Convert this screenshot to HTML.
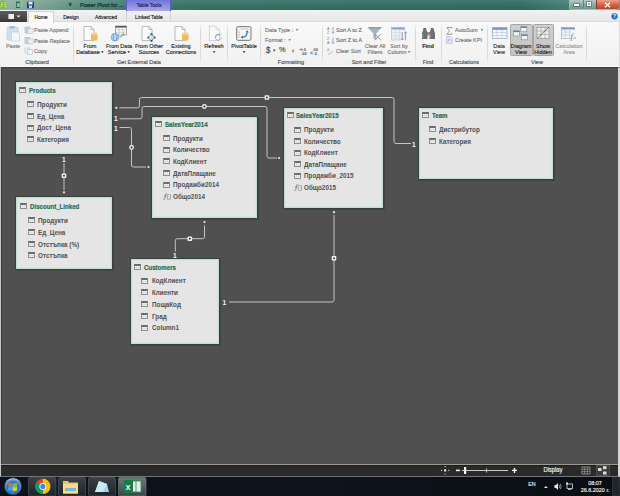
<!DOCTYPE html>
<html><head><meta charset="utf-8">
<style>
*{margin:0;padding:0;box-sizing:border-box}
html,body{width:620px;height:496px;overflow:hidden;background:#505050;font-family:"Liberation Sans",sans-serif}
.a{position:absolute}
#title{left:0;top:0;width:620px;height:10.5px;background:linear-gradient(rgba(255,255,255,0.10),rgba(255,255,255,0) 70%),linear-gradient(90deg,#93b5a3 0,#7ba291 40px,#548d7d 85px,#3f7b6e 125px,#326f63 200px,#2f6a60 400px,#2d6961 520px,#3f7d74 565px,#5f958c 620px)}
#tabs{left:0;top:10px;width:620px;height:12px;background:linear-gradient(#f2f2f2,#e6e6e6);border-bottom:1px solid #dadada}
#ribbon{left:0;top:22px;width:620px;height:45px;background:linear-gradient(#f9f9f9,#f0f0f0);border-bottom:1.5px solid #fafafa;border-right:1px solid #dcdcdc}
#canvas{left:0;top:67px;width:620px;height:397px;background:#505050;border-top:1.5px solid #3c3c3c;border-right:2px solid #d6d6d6}
#status{left:0;top:464px;width:620px;height:13px;background:linear-gradient(#9a9a9a 0,#9a9a9a 1.5px,#1c1c1c 1.5px,#1c1c1c 2.5px,#2a2a2a 2.5px);border-bottom:1px solid #6f7376;border-left:1.2px solid #c4c4c4;border-right:2px solid #d6d6d6}
#taskbar{left:0;top:477px;width:620px;height:19px;background:linear-gradient(90deg,#0c1119,#0e141c 50%,#0a0e14)}
.t{position:absolute;white-space:nowrap;font-size:6px;color:#444;line-height:7px}
.box{position:absolute;background:#e5e5e5;border:1px solid #bfe0d0;box-shadow:inset 0 0 0 1px rgba(205,232,219,0.6),0 0 0 1px #36423c,0 0 1px 1.5px rgba(40,50,45,0.35)}
.bt{position:absolute;font-weight:bold;color:#2a6c4e;font-size:7px;line-height:7px;white-space:nowrap;-webkit-text-stroke:0.2px currentColor;transform:scaleX(0.875);transform-origin:0 50%}
.bf{position:absolute;font-weight:bold;color:#505050;font-size:7px;line-height:7px;white-space:nowrap;transform:scaleX(0.9);transform-origin:0 50%}
.ic{position:absolute;width:7px;height:6px;border:1px solid #8c8c8c;background:
 linear-gradient(#9a9a9a,#9a9a9a) 0 1px/100% 0.8px no-repeat,
 linear-gradient(#c4c4c4,#c4c4c4) 1.6px 0/0.8px 100% no-repeat,
 linear-gradient(#c4c4c4,#c4c4c4) 3.2px 0/0.8px 100% no-repeat,
 #f4f4f4}
.c{position:absolute;transform:translateX(-50%) scaleX(0.92);white-space:nowrap;font-size:6px;line-height:6px;color:#222;-webkit-text-stroke:0.15px currentColor}
.l{position:absolute;transform:scaleX(0.92);transform-origin:0 50%;white-space:nowrap;font-size:6px;line-height:6px;color:#222;-webkit-text-stroke:0.15px currentColor}
.sep{position:absolute;top:25px;width:1px;height:38px;background:linear-gradient(rgba(214,214,214,0.3),#d9d9d9 20%,#d9d9d9 80%,rgba(214,214,214,0.3))}
</style></head><body>
<div id="title" class="a"></div>
<div id="tabs" class="a"></div>
<div id="ribbon" class="a"></div>
<div id="canvas" class="a"></div>
<div class="a" style="left:0;top:67px;width:1.2px;height:397px;background:#c4c4c4"></div><div class="a" style="left:1.2px;top:67px;width:1px;height:397px;background:#3e3e3e"></div>
<!-- title bar -->
<svg class="a" style="left:0;top:0" width="80" height="10" viewBox="0 0 80 10">
<circle cx="3" cy="4.8" r="4.2" fill="#7fb83a"/><path d="M2 2.5V5.5q0 1.5-1.5 1.5M4.3 2.8h2M4.3 4.8h2M4.3 6.8h2" stroke="#e9f5d0" stroke-width="0.9" fill="none"/>
<rect x="16" y="1.6" width="4.2" height="6.4" fill="#1d6b40"/><rect x="19.5" y="2.4" width="3.6" height="4.8" fill="#8fb89c"/><text x="16.6" y="6.6" font-size="4.6" font-weight="bold" fill="#e8f3ea" font-family="Liberation Sans">X</text>
<rect x="27" y="1.6" width="7" height="6.6" fill="#2a3f9a"/><rect x="28.5" y="1.8" width="4" height="2.6" fill="#e8eefc"/><rect x="29" y="5.5" width="3" height="2.5" fill="#c9d4f0"/>
<rect x="38" y="3" width="4.5" height="3.5" fill="#7aa0a8" opacity="0.45"/><rect x="47" y="3" width="5" height="3.5" fill="#7aa0a8" opacity="0.35"/><rect x="60" y="3.5" width="5" height="3" fill="#7aa0a8" opacity="0.35"/>
<path d="M68.7 4.2h3l-1.5 2z" fill="#1a1a1a"/><rect x="68.7" y="2.8" width="3" height="0.7" fill="#1a1a1a"/>
</svg>
<div class="l" style="left:80px;top:2.3px;font-size:6px;color:#142020">Power Pivot for ...</div>
<div class="a" style="left:126px;top:0;width:45px;height:10.5px;background:linear-gradient(#6f74d8,#8d90e4 55%,#a9a8ec);border-left:1px solid #5a5fc0;border-right:1px solid #5a5fc0"></div>
<div class="c" style="left:148.5px;top:1.7px;font-size:5.4px;color:#1d1d44">Table Tools</div>
<div class="a" style="left:568.5px;top:0;width:50.5px;height:9.6px;border:1px solid rgba(220,235,230,0.55);border-top:none;border-radius:0 0 2px 2px"></div>
<div class="a" style="left:569.5px;top:0;width:13.5px;height:8.6px;background:linear-gradient(#b4cbc4,#86aba1 55%,#6e988d)"></div>
<div class="a" style="left:573.5px;top:4.2px;width:5px;height:1.6px;background:#fff;box-shadow:0 0 0 0.5px #445"></div>
<div class="a" style="left:583px;top:0;width:13px;height:8.6px;background:linear-gradient(#b4cbc4,#86aba1 55%,#6e988d);border-left:0.6px solid #5d8a80"></div>
<div class="a" style="left:586.5px;top:2.2px;width:4.6px;height:3.8px;border:1.2px solid #fff;box-shadow:0 0 0 0.5px #445"></div>
<div class="a" style="left:596px;top:0;width:22.5px;height:8.6px;background:linear-gradient(#eba08c,#d7664a 50%,#c0402a);border-left:0.6px solid #8c3a2c;border-radius:0 0 2px 0"></div>
<svg class="a" style="left:604px;top:1.5px" width="7" height="6"><path d="M1 0.8l5 4.4M6 0.8l-5 4.4" stroke="#fff" stroke-width="1.5"/></svg>
<!-- tabs -->
<div class="a" style="left:0;top:11px;width:27.3px;height:10.5px;background:linear-gradient(#5c5c5c,#3a3a3a)"></div>
<div class="a" style="left:7.5px;top:13.5px;width:6px;height:5px;background:#eee;border-left:1.5px solid #aaa"></div>
<svg class="a" style="left:16px;top:15px" width="5" height="3"><path d="M0.5 0.5h4l-2 2z" fill="#eee"/></svg>
<div class="a" style="left:28px;top:11px;width:25.5px;height:11.5px;background:#fafafa;border:1px solid #d2d2d2;border-bottom:none"></div>
<div class="c" style="left:41px;top:14.1px;font-size:5.4px;color:#1a1a1a">Home</div>
<div class="c" style="left:70.7px;top:14.1px;font-size:5.4px;color:#1a1a1a">Design</div>
<div class="c" style="left:106.2px;top:14.1px;font-size:5.4px;color:#1a1a1a">Advanced</div>
<div class="a" style="left:126px;top:10.5px;width:45px;height:11px;border-left:1px solid #d0d0d6;border-right:1px solid #d0d0d6"></div>
<div class="c" style="left:148.5px;top:14.1px;font-size:5.4px;color:#1a1a1a">Linked Table</div>
<svg class="a" style="left:610px;top:12px" width="9" height="9"><circle cx="4.5" cy="4.3" r="3.1" fill="#2f68c9"/><text x="4.5" y="6.2" font-size="4.8" font-weight="bold" fill="#fff" text-anchor="middle" font-family="Liberation Sans">?</text></svg>
<!-- clipboard -->
<svg class="a" style="left:5px;top:25px" width="18" height="17" viewBox="0 0 18 17">
<rect x="2.2" y="2.2" width="11" height="13" rx="0.8" fill="#d3dde6" stroke="#bccbd7" stroke-width="0.7"/>
<rect x="4.5" y="1" width="5.5" height="2.4" rx="0.6" fill="#a9bccb"/>
<path d="M6.5 7h6l2 2v7h-8z" fill="#f2f5f9" stroke="#c2ced9" stroke-width="0.7"/>
</svg>
<div class="c" style="left:13px;top:42.6px;color:#7a7a7a">Paste</div>
<svg class="a" style="left:24px;top:25px" width="10" height="30" viewBox="0 0 10 30">
<rect x="1" y="2" width="5" height="6" fill="#c5d0da" stroke="#aab8c4" stroke-width="0.6"/><rect x="4" y="3.5" width="5" height="5" fill="#e9eef3" stroke="#b8c4cf" stroke-width="0.6"/>
<rect x="1" y="12.5" width="5" height="6" fill="#c5d0da" stroke="#aab8c4" stroke-width="0.6"/><rect x="4" y="14" width="5" height="5" fill="#e9eef3" stroke="#b8c4cf" stroke-width="0.6"/>
<rect x="1" y="23" width="5" height="5" fill="#f0f3f6" stroke="#b8c4cf" stroke-width="0.6"/><rect x="3.5" y="24.5" width="5" height="5" fill="#f0f3f6" stroke="#b8c4cf" stroke-width="0.6"/>
</svg>
<div class="l" style="left:34px;top:26.8px;color:#747474">Paste Append</div>
<div class="l" style="left:34px;top:38.1px;color:#747474">Paste Replace</div>
<div class="l" style="left:34px;top:48.1px;color:#747474">Copy</div>
<div class="c" style="left:37px;top:59.1px;color:#4e4e4e">Clipboard</div>
<div class="sep" style="left:72.5px"></div>
<!-- get external data -->
<svg class="a" style="left:82px;top:25px" width="18" height="17" viewBox="0 0 18 17">
<path d="M2 1.5h7l3 3v11H2z" fill="#fbfbfb" stroke="#a9a9a9" stroke-width="0.8"/><path d="M9 1.5v3h3" fill="none" stroke="#a9a9a9" stroke-width="0.8"/>
<rect x="9" y="8.5" width="6.5" height="7" rx="1.5" fill="#f3b95a"/><ellipse cx="12.25" cy="8.8" rx="3.25" ry="1.2" fill="#f7d08a"/>
</svg>
<div class="c" style="left:90px;top:42.6px">From</div>
<div class="c" style="left:90px;top:49.4px">Database<span style="font-size:3.5px;vertical-align:1px;margin-left:1px">&#9660;</span></div>
<svg class="a" style="left:109px;top:25px" width="20" height="17" viewBox="0 0 20 17">
<rect x="6.5" y="1" width="11" height="9" fill="#fbfbfb" stroke="#8a8a8a" stroke-width="0.7"/><rect x="6.5" y="1" width="11" height="1.6" fill="#555"/>
<path d="M6.5 4.8h11M6.5 7.3h11M10 2.6V10M13.8 2.6V10" stroke="#aaa" stroke-width="0.5"/>
<circle cx="6" cy="12.2" r="3.8" fill="#9cc3e6" stroke="#4f86bf" stroke-width="0.6"/><path d="M2.2 12.2h7.6M6 8.4v7.6M3 10.2h6M3 14.2h6" stroke="#e6f0fa" stroke-width="0.5"/><ellipse cx="6" cy="12.2" rx="1.8" ry="3.8" fill="none" stroke="#4f86bf" stroke-width="0.5"/>
<path d="M10.5 12c2 0 3.5-1 4-3M13.2 9.3l1.3-0.8 0.4 1.5" stroke="#3aa090" stroke-width="0.8" fill="none"/>
</svg>
<div class="c" style="left:118.7px;top:42.6px">From Data</div>
<div class="c" style="left:118.7px;top:49.4px">Service<span style="font-size:3.5px;vertical-align:1px;margin-left:1px">&#9660;</span></div>
<svg class="a" style="left:139px;top:25px" width="18" height="17" viewBox="0 0 18 17">
<path d="M3 1.5h7l3 3v11H3z" fill="#fbfbfb" stroke="#a9a9a9" stroke-width="0.8"/><path d="M10 1.5v3h3" fill="none" stroke="#a9a9a9" stroke-width="0.8"/>
<path d="M12.5 9l3.2 3.5-3.2 3.5-3.2-3.5z" fill="none" stroke="#2f6fb0" stroke-width="0.8"/><circle cx="12.5" cy="9" r="1" fill="#1f5a9a"/><circle cx="15.7" cy="12.5" r="1" fill="#1f5a9a"/><circle cx="9.3" cy="12.5" r="1" fill="#1f5a9a"/><circle cx="12.5" cy="16" r="1" fill="#1f5a9a"/>
</svg>
<div class="c" style="left:148.5px;top:42.6px">From Other</div>
<div class="c" style="left:148.5px;top:49.4px">Sources</div>
<svg class="a" style="left:173px;top:25px" width="18" height="17" viewBox="0 0 18 17">
<path d="M2 1.5h7l3 3v11H2z" fill="#fbfbfb" stroke="#a9a9a9" stroke-width="0.8"/><path d="M9 1.5v3h3" fill="none" stroke="#a9a9a9" stroke-width="0.8"/>
<rect x="9" y="8.5" width="6.5" height="7" rx="1.5" fill="#f3b95a"/><ellipse cx="12.25" cy="8.8" rx="3.25" ry="1.2" fill="#f7d08a"/>
</svg>
<div class="c" style="left:181px;top:42.6px">Existing</div>
<div class="c" style="left:181px;top:49.4px">Connections</div>
<div class="c" style="left:139px;top:59.1px;color:#4e4e4e">Get External Data</div>
<div class="sep" style="left:199.5px"></div>
<!-- refresh -->
<svg class="a" style="left:207px;top:25px" width="18" height="17" viewBox="0 0 18 17">
<path d="M2.5 1.2h6.5l3.5 3.5v10.8h-10z" fill="#fbfbfb" stroke="#c4c8cc" stroke-width="0.7"/><path d="M9 1.2v3.5h3.5" fill="none" stroke="#c4c8cc" stroke-width="0.7"/>
<path d="M14.2 12.3a3 3 0 1 1-1-2.3M8.8 12a3 3 0 0 1 4.3-2" stroke="#98a4b2" stroke-width="1" fill="none"/><path d="M12.4 8.6l1.6 1.2-1.8 0.6z" fill="#98a4b2"/>
</svg>
<div class="c" style="left:213.7px;top:42.6px">Refresh</div>
<div class="c" style="left:213.7px;top:49.4px;font-size:3.5px">&#9660;</div>
<div class="sep" style="left:226.5px"></div>
<!-- pivottable -->
<svg class="a" style="left:236px;top:26px" width="16" height="15" viewBox="0 0 16 15">
<rect x="0.6" y="0.6" width="14.4" height="13.8" rx="1.6" fill="#e9e9e9" stroke="#6f6f6f" stroke-width="0.9"/>
<rect x="2" y="2" width="11.6" height="11" fill="#f7f7f7"/>
<path d="M4.5 3h8.5" stroke="#9a9a9a" stroke-width="0.9" stroke-dasharray="1 0.6"/><path d="M3 4.5v8" stroke="#9a9a9a" stroke-width="0.9" stroke-dasharray="1 0.6"/>
<path d="M6 11.2c2.8 0 5-1.8 5.2-5" stroke="#2c6fb8" stroke-width="1.2" fill="none"/><path d="M9.5 6.3l1.8-2 1.6 2.2zM6.8 9.5l-2.2 1.7 2.2 1.6z" fill="#2c6fb8"/>
</svg>
<div class="c" style="left:243.5px;top:42.6px">PivotTable</div>
<div class="c" style="left:243.5px;top:49.4px;font-size:3.5px">&#9660;</div>
<div class="sep" style="left:260.0px"></div>
<!-- formatting -->
<div class="l" style="left:264.5px;top:26.8px;color:#747474">Data Type :&nbsp;<span style="font-size:3.5px;vertical-align:1px;margin-left:1px">&#9660;</span></div>
<div class="l" style="left:264.5px;top:37.3px;color:#747474">Format :&nbsp;<span style="font-size:3.5px;vertical-align:1px;margin-left:1px">&#9660;</span></div>
<div class="l" style="left:265.5px;top:47.2px;font-size:8.5px;color:#444">$</div>
<div class="l" style="left:272.5px;top:47.7px;font-size:4.5px;color:#555">▾</div>
<div class="l" style="left:279px;top:47.4px;font-size:8px;color:#444">%</div>
<div class="l" style="left:291.5px;top:45.6px;font-size:8px;font-weight:bold;color:#444">,</div>
<svg class="a" style="left:299px;top:46.5px" width="21" height="8" viewBox="0 0 21 8">
<path d="M0.5 2.6h2.6M2 1.3l1.3 1.3L2 3.9" stroke="#2f78c8" stroke-width="0.8" fill="none"/>
<text x="3.6" y="3.6" font-size="4" fill="#555" font-family="Liberation Sans" font-weight="bold">.0</text><text x="2.2" y="7.8" font-size="4" fill="#555" font-family="Liberation Sans" font-weight="bold">.00</text>
<path d="M11.5 6h2.6M12.8 4.7L11.5 6l1.3 1.3" stroke="#2f78c8" stroke-width="0.8" fill="none"/>
<text x="13.3" y="3.6" font-size="4" fill="#555" font-family="Liberation Sans" font-weight="bold">.00</text><text x="14.6" y="7.8" font-size="4" fill="#555" font-family="Liberation Sans" font-weight="bold">.0</text>
</svg>
<div class="c" style="left:291px;top:59.1px;color:#4e4e4e">Formatting</div>
<div class="sep" style="left:322.0px"></div>
<!-- sort and filter -->
<svg class="a" style="left:327px;top:25.5px" width="9" height="30" viewBox="0 0 9 30">
<text x="0" y="3.5" font-size="3.6" fill="#6a7a8a" font-family="Liberation Sans">A</text><text x="0" y="7.5" font-size="3.6" fill="#6a7a8a" font-family="Liberation Sans">Z</text><path d="M6 1v6M4.8 5.8L6 7.3 7.2 5.8" stroke="#5a7ab0" stroke-width="0.6" fill="none"/>
<text x="0" y="14" font-size="3.6" fill="#6a7a8a" font-family="Liberation Sans">Z</text><text x="0" y="18" font-size="3.6" fill="#6a7a8a" font-family="Liberation Sans">A</text><path d="M6 11.5v6M4.8 16.3L6 17.8 7.2 16.3" stroke="#5a7ab0" stroke-width="0.6" fill="none"/>
<text x="0" y="24.5" font-size="3.6" fill="#9aa" font-family="Liberation Sans">A</text><path d="M1 28.5l5-3" stroke="#9ab" stroke-width="0.7"/>
</svg>
<div class="l" style="left:336px;top:26.8px;color:#6e6e6e">Sort A to Z</div>
<div class="l" style="left:336px;top:37.3px;color:#6e6e6e">Sort Z to A</div>
<div class="l" style="left:336px;top:47.7px;color:#747474">Clear Sort</div>
<svg class="a" style="left:367px;top:26px" width="16" height="16" viewBox="0 0 16 16">
<path d="M0.8 1.2h14L9.3 7.5v6.5L6.3 12.2V7.5z" fill="#a3b3c2"/><path d="M0.8 1.2h14l-1 1.3H1.8z" fill="#8597aa"/>
<path d="M7.5 7.8l6.5 6.5M14 7.8l-6.5 6.5" stroke="#8a8f96" stroke-width="0.9"/>
</svg>
<div class="c" style="left:375.4px;top:42.6px;color:#747474">Clear All</div>
<div class="c" style="left:375.4px;top:49.4px;color:#747474">Filters</div>
<svg class="a" style="left:391px;top:27px" width="17" height="15" viewBox="0 0 17 15">
<rect x="0.5" y="0.5" width="13" height="12.5" fill="#eef2f6" stroke="#a9bccc" stroke-width="0.6"/><rect x="0.5" y="0.5" width="13" height="2" fill="#8ea6bd"/>
<path d="M0.5 5.5h13M0.5 8.5h13M0.5 11h13M4.5 2.5v10.5M8.5 2.5v10.5" stroke="#c3d0dc" stroke-width="0.5"/>
<rect x="9.5" y="4" width="7" height="10" fill="#f4f5f7" opacity="0.7"/>
<path d="M11.2 5v8M9.8 11.6l1.4 1.4 1.4-1.4M14.6 13V5M13.2 6.4l1.4-1.4 1.4 1.4" stroke="#6d7f92" stroke-width="0.7" fill="none"/>
</svg>
<div class="c" style="left:399.4px;top:42.6px;color:#747474">Sort by</div>
<div class="c" style="left:399.4px;top:49.4px;color:#747474">Column<span style="font-size:3.5px;vertical-align:1px;margin-left:1px">&#9660;</span></div>
<div class="c" style="left:369px;top:59.1px;color:#4e4e4e">Sort and Filter</div>
<div class="sep" style="left:414.5px"></div>
<!-- find -->
<svg class="a" style="left:421px;top:27px" width="15" height="13" viewBox="0 0 15 13">
<path d="M1 12V6.5L2.3 2.5V1h3v1.5L6.5 6.5V12zM8.5 12V6.5L9.7 2.5V1h3v1.5L14 6.5V12z" fill="#6e6e6e"/><rect x="6" y="5" width="3" height="3.5" fill="#8a8a8a"/>
<path d="M2 7v4M9.5 7v4" stroke="#9a9a9a" stroke-width="0.8"/>
</svg>
<div class="c" style="left:428.3px;top:42.6px;color:#333;font-weight:bold">Find</div>
<div class="c" style="left:428.3px;top:59.1px;color:#4e4e4e">Find</div>
<div class="sep" style="left:441.0px"></div>
<!-- calculations -->
<svg class="a" style="left:446px;top:26.5px" width="7" height="8" viewBox="0 0 7 8"><path d="M6 1.6V0.6H0.8L3.6 3.9L0.8 7.2H6V6.2" stroke="#707088" stroke-width="0.7" fill="none"/></svg>
<div class="l" style="left:454.5px;top:26.8px;color:#747474">AutoSum&nbsp;<span style="font-size:3.5px;vertical-align:1px;margin-left:1px">&#9660;</span></div>
<svg class="a" style="left:446px;top:36px" width="7" height="8" viewBox="0 0 7 8"><path d="M0.5 0.5h4.5l1.5 1.5v5.5h-6z" fill="#e4e2f4" stroke="#bdb8dc" stroke-width="0.6"/><path d="M1.5 6l2-3 1.5 1.5" stroke="#9a90d0" stroke-width="0.6" fill="none"/></svg>
<div class="l" style="left:454.5px;top:37.3px;color:#747474">Create KPI</div>
<div class="c" style="left:463.8px;top:59.1px;color:#4e4e4e">Calculations</div>
<div class="sep" style="left:486.5px"></div>
<!-- view -->
<svg class="a" style="left:492px;top:26.5px" width="16" height="13" viewBox="0 0 16 13">
<rect x="0.5" y="0.5" width="14.5" height="11" fill="#f5f8fb" stroke="#8aa4c0" stroke-width="0.7"/><rect x="0.5" y="0.5" width="14.5" height="2.4" fill="#7c9cc4"/>
<path d="M0.5 5.5h14.5M0.5 8.5h14.5M5 2.9v8.6M10 2.9v8.6" stroke="#a8bcd0" stroke-width="0.5"/>
</svg>
<div class="c" style="left:499px;top:42.6px;color:#333">Data</div>
<div class="c" style="left:499px;top:49.4px;color:#333">View</div>
<div class="a" style="left:509.5px;top:24px;width:23px;height:31.5px;background:linear-gradient(#cfcfcf,#c3c3c3);border:1px solid #a5a5a5;border-radius:1.5px"></div>
<div class="a" style="left:532.5px;top:24px;width:21px;height:31.5px;background:linear-gradient(#cfcfcf,#c3c3c3);border:1px solid #a5a5a5;border-radius:1.5px"></div>
<svg class="a" style="left:512px;top:25.5px" width="18" height="15" viewBox="0 0 18 15">
<rect x="1.5" y="4.8" width="6" height="5.2" fill="#f2f2f2" stroke="#7d8a96" stroke-width="0.6"/><rect x="1.5" y="4.8" width="6" height="1.3" fill="#4f7fc0"/>
<rect x="8.8" y="0.6" width="6" height="5.2" fill="#f2f2f2" stroke="#7d8a96" stroke-width="0.6"/><rect x="8.8" y="0.6" width="6" height="1.3" fill="#4f7fc0"/>
<rect x="9.5" y="8.6" width="6" height="5.2" fill="#f2f2f2" stroke="#7d8a96" stroke-width="0.6"/><rect x="9.5" y="8.6" width="6" height="1.3" fill="#4f7fc0"/>
</svg>
<div class="c" style="left:521px;top:42.6px;color:#222">Diagram</div>
<div class="c" style="left:521px;top:49.4px;color:#222">View</div>
<svg class="a" style="left:536px;top:26px" width="14" height="14" viewBox="0 0 14 14">
<rect x="1" y="1.5" width="12" height="11" fill="#efefef" stroke="#8a8a8a" stroke-width="0.6"/>
<path d="M1 5h12M1 8.5h12M5 1.5v11M9 1.5v11" stroke="#a0a0a0" stroke-width="0.6"/><path d="M1 12.5L13 1" stroke="#555" stroke-width="0.8"/>
</svg>
<div class="c" style="left:543px;top:42.6px;color:#222">Show</div>
<div class="c" style="left:543px;top:49.4px;color:#222">Hidden</div>
<svg class="a" style="left:561px;top:27px" width="17" height="14" viewBox="0 0 17 14">
<rect x="0.5" y="0.5" width="13" height="11" fill="#eef3f8" stroke="#8fa6bf" stroke-width="0.6"/><rect x="0.5" y="0.5" width="13" height="2" fill="#7f9cc0"/>
<path d="M0.5 5h13M0.5 8h13M4.5 2.5v9M8.5 2.5v9" stroke="#b5c5d6" stroke-width="0.5"/>
<rect x="9.5" y="3" width="7" height="10" fill="#f4f6f9"/>
<text x="9.6" y="11.5" font-size="8.5" font-style="italic" fill="#5f6f86" font-family="Liberation Serif">f</text><text x="12.6" y="12.2" font-size="5" font-style="italic" fill="#5f6f86" font-family="Liberation Serif">x</text>
</svg>
<div class="c" style="left:569px;top:42.6px;color:#999">Calculation</div>
<div class="c" style="left:569px;top:49.4px;color:#999">Area</div>
<div class="c" style="left:536.5px;top:59.1px;color:#4e4e4e">View</div>
<div class="sep" style="left:586.0px"></div>

<div id="status" class="a"></div>
<div id="taskbar" class="a"></div>

<!-- status bar -->
<svg class="a" style="left:440px;top:465px" width="180" height="11" viewBox="0 0 180 11">
<g fill="#e8e8e8"><rect x="4" y="4.3" width="2.2" height="2.2"/><rect x="4.6" y="1" width="1" height="1"/><rect x="4.6" y="8.8" width="1" height="1"/><rect x="1" y="4.9" width="1" height="1"/><rect x="8.2" y="4.9" width="1" height="1"/></g>
<rect x="16" y="4.6" width="4" height="1.6" fill="#f2f2f2"/>
<rect x="22" y="5" width="46" height="0.9" fill="#ddd"/>
<rect x="24" y="2" width="2.2" height="7" fill="#f5f5f5"/>
<rect x="46" y="3.5" width="0.9" height="4" fill="#ddd"/>
<path d="M72 5.4h5M74.5 2.9v5" stroke="#f2f2f2" stroke-width="1.4"/>
<rect x="142" y="2" width="8" height="7" fill="none" stroke="#bbb" stroke-width="0.6"/><path d="M142 4.3h8M142 6.6h8M144.7 2v7M147.3 2v7" stroke="#bbb" stroke-width="0.5"/>
<rect x="156.5" y="0.3" width="13" height="10.4" fill="#3a3a3a" stroke="#6a6a6a" stroke-width="0.5"/>
<rect x="158" y="3" width="3.5" height="3" fill="#ddd"/><rect x="163" y="1.2" width="3.5" height="3" fill="#ddd"/><rect x="163" y="6.5" width="3.5" height="3" fill="#ddd"/>
</svg>
<div class="c" style="left:552.8px;top:467.3px;color:#f4f4f4;font-size:6.3px">Display</div>
<!-- taskbar -->
<svg class="a" style="left:0;top:477px" width="620" height="19" viewBox="0 0 620 19">
<defs>
<radialGradient id="orb" cx="50%" cy="60%" r="55%"><stop offset="0" stop-color="#4fb0e8"/><stop offset="0.6" stop-color="#2a70b0"/><stop offset="0.9" stop-color="#6a9ec8"/><stop offset="1" stop-color="#c8dcea"/></radialGradient>
<linearGradient id="tile" x1="0" y1="0" x2="0" y2="1"><stop offset="0" stop-color="#3a4046"/><stop offset="1" stop-color="#1e2328"/></linearGradient>
<linearGradient id="tile2" x1="0" y1="0" x2="0" y2="1"><stop offset="0" stop-color="#6b7a7a"/><stop offset="1" stop-color="#3a4646"/></linearGradient>
</defs>
<circle cx="13" cy="9.4" r="8.6" fill="url(#orb)" stroke="#0b1a2a" stroke-width="0.6"/>
<path d="M8.3 6.4q2-1.2 4 -0.3v3.4q-2-0.9-4 0.3z" fill="#f0623a"/><path d="M13 6.1q2 0.9 4.2-0.3v3.5q-2.2 1.2-4.2 0.3z" fill="#7cc242"/>
<path d="M8.1 10.4q2-1.2 4 -0.3v3.4q-2-0.9-4 0.3z" fill="#33a5e8"/><path d="M12.8 10.1q2 0.9 4.2-0.3v3.5q-2.2 1.2-4.2 0.3z" fill="#f8c81e"/>
<rect x="28.5" y="0.5" width="27.5" height="18.5" rx="1.5" fill="url(#tile)" stroke="#5f6870" stroke-width="0.5"/>
<circle cx="42.8" cy="9.4" r="7.6" fill="#db4437"/>
<path d="M42.8 1.8A7.6 7.6 0 0 1 49.38 5.6L42.8 9.4z" fill="#f4c20d"/><path d="M49.38 5.6A7.6 7.6 0 0 1 42.8 17L42.8 9.4z" fill="#f4c20d"/>
<path d="M42.8 17A7.6 7.6 0 0 1 36.22 5.6L42.8 9.4z" fill="#0f9d58"/>
<circle cx="42.8" cy="9.4" r="3.4" fill="#fff"/><circle cx="42.8" cy="9.4" r="2.6" fill="#4285f4"/>
<rect x="58.5" y="0.5" width="27" height="18.5" rx="1.5" fill="url(#tile)" stroke="#5f6870" stroke-width="0.5"/>
<path d="M63 4h5l1 1.5h9v11H63z" fill="#e8c766"/><rect x="63" y="7" width="15" height="9.5" fill="#f5dc8a"/><rect x="65" y="11" width="11" height="3" fill="#7ab8d8"/>
<rect x="88.5" y="0.5" width="27" height="18.5" rx="1.5" fill="url(#tile)" stroke="#5f6870" stroke-width="0.5"/>
<path d="M95 15l4-11 8 3 2 8z" fill="#9fd3e6"/><path d="M99 4l8 3-4 8h-8z" fill="#c9ecf4"/>
<rect x="118.5" y="0.5" width="27.5" height="18.5" rx="1.5" fill="url(#tile2)" stroke="#7d8a8a" stroke-width="0.5"/>
<rect x="131" y="4" width="10" height="11" fill="#dfeee4" stroke="#2a8a55" stroke-width="0.8"/><path d="M136 4v11" stroke="#2a8a55" stroke-width="0.8"/>
<rect x="124" y="3" width="9" height="13" fill="#1d7a45"/>
<text x="125.6" y="12.6" font-size="7.5" font-weight="bold" fill="#fff" font-family="Liberation Sans">X</text>
<path d="M545.9 9l-2 2h4z" fill="#e0e0e0"/>
<path d="M554.5 8h1.5l2-2v7l-2-2h-1.5z" fill="#e8e8e8"/><path d="M559.2 7.8q0.8 1.7 0 3.4M560.4 6.9q1.3 2.6 0 5.2" stroke="#ddd" stroke-width="0.6" fill="none"/>
<rect x="567" y="7" width="5.5" height="4.5" fill="none" stroke="#ddd" stroke-width="0.8"/><rect x="566" y="5.5" width="2" height="2" fill="#ddd"/><rect x="568" y="12" width="3.5" height="0.8" fill="#ddd"/>
<rect x="612.5" y="0" width="7.5" height="19" fill="#20262c" stroke="#3c444c" stroke-width="0.5"/>
</svg>
<div class="c" style="left:532.2px;top:481.40000000000003px;font-size:5.8px;color:#e6e6e6">EN</div>
<div class="c" style="left:594.6px;top:480.0px;font-size:5.9px;color:#f2f2f2">08:07</div>
<div class="c" style="left:594.6px;top:487.09999999999997px;font-size:5.9px;color:#f2f2f2">26.6.2020 г.</div>

<!-- boxes -->
<div class="box" style="left:16px;top:82px;width:96px;height:72px"></div>
<svg class="a" style="left:19px;top:87px" width="7" height="6" viewBox="0 0 7 6"><rect x="0.5" y="0.5" width="6" height="5" fill="#f8f8f8" stroke="#8c8c8c" stroke-width="1"/><path d="M0 0.5h7M1 1.5h5" stroke="#6c6c6c" stroke-width="1"/><path d="M2.5 2v3M4.5 2v3M1 3.5h5" stroke="#dddddd" stroke-width="1"/></svg>
<div class="bt" style="left:29px;top:87.0px">Products</div>
<svg class="a" style="left:27px;top:101px" width="7" height="6" viewBox="0 0 7 6"><rect x="0.5" y="0.5" width="6" height="5" fill="#f8f8f8" stroke="#8c8c8c" stroke-width="1"/><path d="M0 0.5h7M1 1.5h5" stroke="#6c6c6c" stroke-width="1"/><path d="M2.5 2v3M4.5 2v3M1 3.5h5" stroke="#dddddd" stroke-width="1"/></svg>
<div class="bf" style="left:37px;top:100.8px">Продукти</div>
<svg class="a" style="left:27px;top:113px" width="7" height="6" viewBox="0 0 7 6"><rect x="0.5" y="0.5" width="6" height="5" fill="#f8f8f8" stroke="#8c8c8c" stroke-width="1"/><path d="M0 0.5h7M1 1.5h5" stroke="#6c6c6c" stroke-width="1"/><path d="M2.5 2v3M4.5 2v3M1 3.5h5" stroke="#dddddd" stroke-width="1"/></svg>
<div class="bf" style="left:37px;top:112.7px">Ед_Цена</div>
<svg class="a" style="left:27px;top:125px" width="7" height="6" viewBox="0 0 7 6"><rect x="0.5" y="0.5" width="6" height="5" fill="#f8f8f8" stroke="#8c8c8c" stroke-width="1"/><path d="M0 0.5h7M1 1.5h5" stroke="#6c6c6c" stroke-width="1"/><path d="M2.5 2v3M4.5 2v3M1 3.5h5" stroke="#dddddd" stroke-width="1"/></svg>
<div class="bf" style="left:37px;top:124.2px">Дост_Цена</div>
<svg class="a" style="left:27px;top:136px" width="7" height="6" viewBox="0 0 7 6"><rect x="0.5" y="0.5" width="6" height="5" fill="#f8f8f8" stroke="#8c8c8c" stroke-width="1"/><path d="M0 0.5h7M1 1.5h5" stroke="#6c6c6c" stroke-width="1"/><path d="M2.5 2v3M4.5 2v3M1 3.5h5" stroke="#dddddd" stroke-width="1"/></svg>
<div class="bf" style="left:37px;top:135.7px">Категория</div>
<div class="box" style="left:16px;top:197px;width:96px;height:72px"></div>
<svg class="a" style="left:20px;top:203px" width="7" height="6" viewBox="0 0 7 6"><rect x="0.5" y="0.5" width="6" height="5" fill="#f8f8f8" stroke="#8c8c8c" stroke-width="1"/><path d="M0 0.5h7M1 1.5h5" stroke="#6c6c6c" stroke-width="1"/><path d="M2.5 2v3M4.5 2v3M1 3.5h5" stroke="#dddddd" stroke-width="1"/></svg>
<div class="bt" style="left:30px;top:203.1px">Discount_Linked</div>
<svg class="a" style="left:28px;top:217px" width="7" height="6" viewBox="0 0 7 6"><rect x="0.5" y="0.5" width="6" height="5" fill="#f8f8f8" stroke="#8c8c8c" stroke-width="1"/><path d="M0 0.5h7M1 1.5h5" stroke="#6c6c6c" stroke-width="1"/><path d="M2.5 2v3M4.5 2v3M1 3.5h5" stroke="#dddddd" stroke-width="1"/></svg>
<div class="bf" style="left:38px;top:216.8px">Продукти</div>
<svg class="a" style="left:28px;top:229px" width="7" height="6" viewBox="0 0 7 6"><rect x="0.5" y="0.5" width="6" height="5" fill="#f8f8f8" stroke="#8c8c8c" stroke-width="1"/><path d="M0 0.5h7M1 1.5h5" stroke="#6c6c6c" stroke-width="1"/><path d="M2.5 2v3M4.5 2v3M1 3.5h5" stroke="#dddddd" stroke-width="1"/></svg>
<div class="bf" style="left:38px;top:228.6px">Ед_Цена</div>
<svg class="a" style="left:28px;top:241px" width="7" height="6" viewBox="0 0 7 6"><rect x="0.5" y="0.5" width="6" height="5" fill="#f8f8f8" stroke="#8c8c8c" stroke-width="1"/><path d="M0 0.5h7M1 1.5h5" stroke="#6c6c6c" stroke-width="1"/><path d="M2.5 2v3M4.5 2v3M1 3.5h5" stroke="#dddddd" stroke-width="1"/></svg>
<div class="bf" style="left:38px;top:240.5px">Отстъпка (%)</div>
<svg class="a" style="left:28px;top:252px" width="7" height="6" viewBox="0 0 7 6"><rect x="0.5" y="0.5" width="6" height="5" fill="#f8f8f8" stroke="#8c8c8c" stroke-width="1"/><path d="M0 0.5h7M1 1.5h5" stroke="#6c6c6c" stroke-width="1"/><path d="M2.5 2v3M4.5 2v3M1 3.5h5" stroke="#dddddd" stroke-width="1"/></svg>
<div class="bf" style="left:38px;top:251.9px">Отстъпка</div>
<div class="box" style="left:152px;top:117px;width:105px;height:101px"></div>
<svg class="a" style="left:155px;top:121px" width="7" height="6" viewBox="0 0 7 6"><rect x="0.5" y="0.5" width="6" height="5" fill="#f8f8f8" stroke="#8c8c8c" stroke-width="1"/><path d="M0 0.5h7M1 1.5h5" stroke="#6c6c6c" stroke-width="1"/><path d="M2.5 2v3M4.5 2v3M1 3.5h5" stroke="#dddddd" stroke-width="1"/></svg>
<div class="bt" style="left:165px;top:120.7px">SalesYear2014</div>
<svg class="a" style="left:163px;top:135px" width="7" height="6" viewBox="0 0 7 6"><rect x="0.5" y="0.5" width="6" height="5" fill="#f8f8f8" stroke="#8c8c8c" stroke-width="1"/><path d="M0 0.5h7M1 1.5h5" stroke="#6c6c6c" stroke-width="1"/><path d="M2.5 2v3M4.5 2v3M1 3.5h5" stroke="#dddddd" stroke-width="1"/></svg>
<div class="bf" style="left:173px;top:134.7px">Продукти</div>
<svg class="a" style="left:163px;top:147px" width="7" height="6" viewBox="0 0 7 6"><rect x="0.5" y="0.5" width="6" height="5" fill="#f8f8f8" stroke="#8c8c8c" stroke-width="1"/><path d="M0 0.5h7M1 1.5h5" stroke="#6c6c6c" stroke-width="1"/><path d="M2.5 2v3M4.5 2v3M1 3.5h5" stroke="#dddddd" stroke-width="1"/></svg>
<div class="bf" style="left:173px;top:146.3px">Количество</div>
<svg class="a" style="left:163px;top:158px" width="7" height="6" viewBox="0 0 7 6"><rect x="0.5" y="0.5" width="6" height="5" fill="#f8f8f8" stroke="#8c8c8c" stroke-width="1"/><path d="M0 0.5h7M1 1.5h5" stroke="#6c6c6c" stroke-width="1"/><path d="M2.5 2v3M4.5 2v3M1 3.5h5" stroke="#dddddd" stroke-width="1"/></svg>
<div class="bf" style="left:173px;top:157.8px">КодКлиент</div>
<svg class="a" style="left:163px;top:170px" width="7" height="6" viewBox="0 0 7 6"><rect x="0.5" y="0.5" width="6" height="5" fill="#f8f8f8" stroke="#8c8c8c" stroke-width="1"/><path d="M0 0.5h7M1 1.5h5" stroke="#6c6c6c" stroke-width="1"/><path d="M2.5 2v3M4.5 2v3M1 3.5h5" stroke="#dddddd" stroke-width="1"/></svg>
<div class="bf" style="left:173px;top:169.5px">ДатаПлащане</div>
<svg class="a" style="left:163px;top:182px" width="7" height="6" viewBox="0 0 7 6"><rect x="0.5" y="0.5" width="6" height="5" fill="#f8f8f8" stroke="#8c8c8c" stroke-width="1"/><path d="M0 0.5h7M1 1.5h5" stroke="#6c6c6c" stroke-width="1"/><path d="M2.5 2v3M4.5 2v3M1 3.5h5" stroke="#dddddd" stroke-width="1"/></svg>
<div class="bf" style="left:173px;top:181.0px">Продажби2014</div>
<svg class="a" style="left:163px;top:192.5px" width="8" height="7" viewBox="0 0 8 7"><path d="M0.4 6.6Q1.6 6.8 1.9 5L2.5 1.4Q2.8 0.2 3.8 0.5M1 3h2.3" stroke="#6e6e6e" stroke-width="0.75" fill="none"/><rect x="4.2" y="1.8" width="3.2" height="4.4" fill="#f0f0f0" stroke="#8a8a8a" stroke-width="0.7"/><path d="M4.2 4h3.2" stroke="#aaa" stroke-width="0.5"/></svg>
<div class="bf" style="left:173px;top:192.5px">Общо2014</div>
<div class="box" style="left:284px;top:108px;width:99px;height:100px"></div>
<svg class="a" style="left:287px;top:112px" width="7" height="6" viewBox="0 0 7 6"><rect x="0.5" y="0.5" width="6" height="5" fill="#f8f8f8" stroke="#8c8c8c" stroke-width="1"/><path d="M0 0.5h7M1 1.5h5" stroke="#6c6c6c" stroke-width="1"/><path d="M2.5 2v3M4.5 2v3M1 3.5h5" stroke="#dddddd" stroke-width="1"/></svg>
<div class="bt" style="left:296px;top:112.0px">SalesYear2015</div>
<svg class="a" style="left:294px;top:127px" width="7" height="6" viewBox="0 0 7 6"><rect x="0.5" y="0.5" width="6" height="5" fill="#f8f8f8" stroke="#8c8c8c" stroke-width="1"/><path d="M0 0.5h7M1 1.5h5" stroke="#6c6c6c" stroke-width="1"/><path d="M2.5 2v3M4.5 2v3M1 3.5h5" stroke="#dddddd" stroke-width="1"/></svg>
<div class="bf" style="left:304px;top:126.1px">Продукти</div>
<svg class="a" style="left:294px;top:138px" width="7" height="6" viewBox="0 0 7 6"><rect x="0.5" y="0.5" width="6" height="5" fill="#f8f8f8" stroke="#8c8c8c" stroke-width="1"/><path d="M0 0.5h7M1 1.5h5" stroke="#6c6c6c" stroke-width="1"/><path d="M2.5 2v3M4.5 2v3M1 3.5h5" stroke="#dddddd" stroke-width="1"/></svg>
<div class="bf" style="left:304px;top:137.7px">Количество</div>
<svg class="a" style="left:294px;top:150px" width="7" height="6" viewBox="0 0 7 6"><rect x="0.5" y="0.5" width="6" height="5" fill="#f8f8f8" stroke="#8c8c8c" stroke-width="1"/><path d="M0 0.5h7M1 1.5h5" stroke="#6c6c6c" stroke-width="1"/><path d="M2.5 2v3M4.5 2v3M1 3.5h5" stroke="#dddddd" stroke-width="1"/></svg>
<div class="bf" style="left:304px;top:149.4px">КодКлиент</div>
<svg class="a" style="left:294px;top:161px" width="7" height="6" viewBox="0 0 7 6"><rect x="0.5" y="0.5" width="6" height="5" fill="#f8f8f8" stroke="#8c8c8c" stroke-width="1"/><path d="M0 0.5h7M1 1.5h5" stroke="#6c6c6c" stroke-width="1"/><path d="M2.5 2v3M4.5 2v3M1 3.5h5" stroke="#dddddd" stroke-width="1"/></svg>
<div class="bf" style="left:304px;top:160.8px">ДатаПлащане</div>
<svg class="a" style="left:294px;top:173px" width="7" height="6" viewBox="0 0 7 6"><rect x="0.5" y="0.5" width="6" height="5" fill="#f8f8f8" stroke="#8c8c8c" stroke-width="1"/><path d="M0 0.5h7M1 1.5h5" stroke="#6c6c6c" stroke-width="1"/><path d="M2.5 2v3M4.5 2v3M1 3.5h5" stroke="#dddddd" stroke-width="1"/></svg>
<div class="bf" style="left:304px;top:172.3px">Продажби_2015</div>
<svg class="a" style="left:294px;top:183.8px" width="8" height="7" viewBox="0 0 8 7"><path d="M0.4 6.6Q1.6 6.8 1.9 5L2.5 1.4Q2.8 0.2 3.8 0.5M1 3h2.3" stroke="#6e6e6e" stroke-width="0.75" fill="none"/><rect x="4.2" y="1.8" width="3.2" height="4.4" fill="#f0f0f0" stroke="#8a8a8a" stroke-width="0.7"/><path d="M4.2 4h3.2" stroke="#aaa" stroke-width="0.5"/></svg>
<div class="bf" style="left:304px;top:183.8px">Общо2015</div>
<div class="box" style="left:419px;top:108px;width:134px;height:71px"></div>
<svg class="a" style="left:422px;top:112px" width="7" height="6" viewBox="0 0 7 6"><rect x="0.5" y="0.5" width="6" height="5" fill="#f8f8f8" stroke="#8c8c8c" stroke-width="1"/><path d="M0 0.5h7M1 1.5h5" stroke="#6c6c6c" stroke-width="1"/><path d="M2.5 2v3M4.5 2v3M1 3.5h5" stroke="#dddddd" stroke-width="1"/></svg>
<div class="bt" style="left:431.5px;top:112.1px">Team</div>
<svg class="a" style="left:429px;top:126px" width="7" height="6" viewBox="0 0 7 6"><rect x="0.5" y="0.5" width="6" height="5" fill="#f8f8f8" stroke="#8c8c8c" stroke-width="1"/><path d="M0 0.5h7M1 1.5h5" stroke="#6c6c6c" stroke-width="1"/><path d="M2.5 2v3M4.5 2v3M1 3.5h5" stroke="#dddddd" stroke-width="1"/></svg>
<div class="bf" style="left:439px;top:126.0px">Дистрибутор</div>
<svg class="a" style="left:429px;top:138px" width="7" height="6" viewBox="0 0 7 6"><rect x="0.5" y="0.5" width="6" height="5" fill="#f8f8f8" stroke="#8c8c8c" stroke-width="1"/><path d="M0 0.5h7M1 1.5h5" stroke="#6c6c6c" stroke-width="1"/><path d="M2.5 2v3M4.5 2v3M1 3.5h5" stroke="#dddddd" stroke-width="1"/></svg>
<div class="bf" style="left:439px;top:138.0px">Категория</div>
<div class="box" style="left:131px;top:259px;width:88px;height:85px"></div>
<svg class="a" style="left:134px;top:264px" width="7" height="6" viewBox="0 0 7 6"><rect x="0.5" y="0.5" width="6" height="5" fill="#f8f8f8" stroke="#8c8c8c" stroke-width="1"/><path d="M0 0.5h7M1 1.5h5" stroke="#6c6c6c" stroke-width="1"/><path d="M2.5 2v3M4.5 2v3M1 3.5h5" stroke="#dddddd" stroke-width="1"/></svg>
<div class="bt" style="left:143.7px;top:264.0px">Customers</div>
<svg class="a" style="left:141px;top:278px" width="7" height="6" viewBox="0 0 7 6"><rect x="0.5" y="0.5" width="6" height="5" fill="#f8f8f8" stroke="#8c8c8c" stroke-width="1"/><path d="M0 0.5h7M1 1.5h5" stroke="#6c6c6c" stroke-width="1"/><path d="M2.5 2v3M4.5 2v3M1 3.5h5" stroke="#dddddd" stroke-width="1"/></svg>
<div class="bf" style="left:151.5px;top:277.0px">КодКлиент</div>
<svg class="a" style="left:141px;top:289px" width="7" height="6" viewBox="0 0 7 6"><rect x="0.5" y="0.5" width="6" height="5" fill="#f8f8f8" stroke="#8c8c8c" stroke-width="1"/><path d="M0 0.5h7M1 1.5h5" stroke="#6c6c6c" stroke-width="1"/><path d="M2.5 2v3M4.5 2v3M1 3.5h5" stroke="#dddddd" stroke-width="1"/></svg>
<div class="bf" style="left:151.5px;top:288.8px">Клиенти</div>
<svg class="a" style="left:141px;top:301px" width="7" height="6" viewBox="0 0 7 6"><rect x="0.5" y="0.5" width="6" height="5" fill="#f8f8f8" stroke="#8c8c8c" stroke-width="1"/><path d="M0 0.5h7M1 1.5h5" stroke="#6c6c6c" stroke-width="1"/><path d="M2.5 2v3M4.5 2v3M1 3.5h5" stroke="#dddddd" stroke-width="1"/></svg>
<div class="bf" style="left:151.5px;top:300.7px">ПощаКод</div>
<svg class="a" style="left:141px;top:313px" width="7" height="6" viewBox="0 0 7 6"><rect x="0.5" y="0.5" width="6" height="5" fill="#f8f8f8" stroke="#8c8c8c" stroke-width="1"/><path d="M0 0.5h7M1 1.5h5" stroke="#6c6c6c" stroke-width="1"/><path d="M2.5 2v3M4.5 2v3M1 3.5h5" stroke="#dddddd" stroke-width="1"/></svg>
<div class="bf" style="left:151.5px;top:312.5px">Град</div>
<svg class="a" style="left:141px;top:325px" width="7" height="6" viewBox="0 0 7 6"><rect x="0.5" y="0.5" width="6" height="5" fill="#f8f8f8" stroke="#8c8c8c" stroke-width="1"/><path d="M0 0.5h7M1 1.5h5" stroke="#6c6c6c" stroke-width="1"/><path d="M2.5 2v3M4.5 2v3M1 3.5h5" stroke="#dddddd" stroke-width="1"/></svg>
<div class="bf" style="left:151.5px;top:324.2px">Column1</div>
<svg class="a" style="left:0;top:0" width="620" height="496" viewBox="0 0 620 496">
<g fill="none" stroke="#c4c4c4" stroke-width="1">
<path d="M119.5 107.8H137.5Q139.5 107.8 139.5 105.8V99.5Q139.5 97.5 141.5 97.5H392Q394 97.5 394 99.5V141.5Q394 143.5 396 143.5H411"/>
<path d="M119.5 118.8H140Q142 118.8 142 116.8V108.5Q142 106.5 144 106.5H265Q267 106.5 267 108.5V156Q267 158 269 158H277"/>
<path d="M119.5 127.5H129.5Q131.5 127.5 131.5 129.5V165Q131.5 167 133.5 167H146"/>
<path d="M64 163V190"/>
<path d="M204.5 225.5V236.7Q204.5 238.7 202.5 238.7H177.3Q175.3 238.7 175.3 240.7V251.5"/>
<path d="M334 215V300Q334 302 332 302H229"/>
</g>
<g fill="#efefef">
<circle cx="116.3" cy="107.8" r="1.1"/><circle cx="148.5" cy="167" r="1.1"/><circle cx="279" cy="158" r="1.1"/>
<circle cx="64" cy="192.3" r="1.1"/><circle cx="204.5" cy="222" r="1.1"/><circle cx="334" cy="212.2" r="1.1"/>
</g>
<g fill="#f2f2f2" stroke="none">
<circle cx="204.4" cy="106.5" r="2.4"/><circle cx="131.6" cy="147.4" r="2.4"/>
<rect x="264.6" y="95.2" width="4.6" height="4.6" rx="0.8"/>
<rect x="61.7" y="173.4" width="4.6" height="4.6" rx="0.8"/>
<rect x="187.5" y="236.4" width="4.6" height="4.6" rx="0.8"/>
<rect x="331.7" y="255.9" width="4.6" height="4.6" rx="0.8"/>
</g>
<g fill="#222">
<circle cx="204.4" cy="106.5" r="1"/><circle cx="131.6" cy="147.4" r="1"/>
<circle cx="266.9" cy="97.5" r="0.9"/><circle cx="64" cy="175.7" r="0.9"/><circle cx="189.8" cy="238.7" r="0.9"/><circle cx="334" cy="258.2" r="0.9"/>
</g>
<g fill="#f7f7f7" font-family="Liberation Sans" font-weight="bold" font-size="6.5">
<text x="114" y="121.3">1</text><text x="114" y="131">1</text><text x="62" y="161.5">1</text>
<text x="412" y="146.5">1</text><text x="173" y="258">1</text><text x="222.5" y="304.5">1</text>
</g>
</svg>

</body></html>
